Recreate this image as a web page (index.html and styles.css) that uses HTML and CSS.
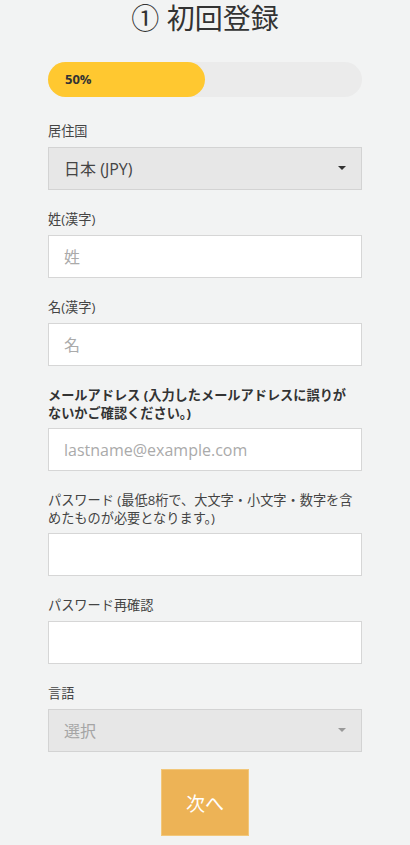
FILE: index.html
```html
<html>
    <head>
        <meta charset="utf-8">
        <link rel="stylesheet" href="styles.css">
    </head>
    <body>
        <div class="page">
            <h1 class="title">① 初回登録</h1>

            <div class="progress">
                <div class="progress-fill" style="width: 50%">50%</div>
            </div>

            <form id="signupForm">
                <div class="field">
                    <label for="country">居住国</label>
                    <div class="select-wrap">
                        <select id="country" name="country">
                            <option>日本 (JPY)</option>
                        </select>
                        <span class="caret"></span>
                    </div>
                </div>

                <div class="field">
                    <label for="lastname">姓(漢字)</label>
                    <input type="text" id="lastname" name="lastname" placeholder="姓" />
                </div>

                <div class="field">
                    <label for="firstname">名(漢字)</label>
                    <input type="text" id="firstname" name="firstname" placeholder="名" />
                </div>

                <div class="field">
                    <label for="email" class="bold multi">メールアドレス (入力したメールアドレスに誤りが<br/>ないかご確認ください。)</label>
                    <input type="text" id="email" name="email" placeholder="lastname@example.com" />
                </div>

                <div class="field">
                    <label for="password" class="multi">パスワード (最低8桁で、大文字・小文字・数字を含<br/>めたものが必要となります。)</label>
                    <input type="password" id="password" name="password" />
                </div>

                <div class="field">
                    <label for="password2">パスワード再確認</label>
                    <input type="password" id="password2" name="password2" />
                </div>

                <div class="field last">
                    <label for="language">言語</label>
                    <div class="select-wrap">
                        <select id="language" name="language" class="empty">
                            <option>選択</option>
                        </select>
                        <span class="caret light"></span>
                    </div>
                </div>

                <div class="actions">
                    <button type="submit" id="next">次へ</button>
                </div>
            </form>
        </div>
    </body>
</html>
```

FILE: styles.css
```css
body {
    margin: 0;
    font-family: "Open Sans", "Noto Sans CJK JP", sans-serif;
    background-color: #f2f3f3;
    color: #444;
}
.page {
    padding: 0 48px;
}
.title {
    margin: 0;
    height: 36px;
    line-height: 36px;
    text-align: center;
    font-size: 28px;
    font-weight: normal;
    color: #333;
}
.progress {
    margin-top: 26px;
    height: 35px;
    border-radius: 18px;
    background-color: #ebebeb;
}
.progress-fill {
    height: 35px;
    line-height: 35px;
    border-radius: 18px;
    background-color: #ffc830;
    padding-left: 17px;
    box-sizing: border-box;
    font-size: 13px;
    font-weight: bold;
    color: #333;
}
form {
    margin-top: 25px;
}
.field {
    margin-bottom: 20px;
}
.field.last {
    margin-bottom: 17px;
}
label {
    display: block;
    font-size: 13.2px;
    line-height: 19px;
    margin-bottom: 6px;
    color: #444;
    white-space: nowrap;
}
label.multi {
    line-height: 18px;
}
label.bold {
    font-weight: bold;
    color: #333;
}
input[type="text"],
input[type="password"],
select {
    display: block;
    width: 100%;
    height: 43px;
    box-sizing: border-box;
    margin: 0;
    padding: 0 15px;
    border: 1px solid #d6d6d6;
    border-radius: 0;
    background-color: #fff;
    font-family: "Open Sans", "Noto Sans CJK JP", sans-serif;
    font-size: 16px;
    color: #444;
    outline: none;
}
input::placeholder {
    color: #aaa;
}
.select-wrap {
    position: relative;
}
select {
    -webkit-appearance: none;
    appearance: none;
    background-color: #e7e7e7;
    border-color: #d3d3d3;
}
select.empty {
    color: #a5a5a5;
}
.caret {
    position: absolute;
    right: 16px;
    top: 19px;
    width: 0;
    height: 0;
    border-left: 4px solid transparent;
    border-right: 4px solid transparent;
    border-top: 4px solid #333;
}
.caret.light {
    border-top-color: #999;
}
.actions {
    display: flex;
    justify-content: center;
}
#next {
    width: 88px;
    height: 67px;
    background-color: #edb356;
    border: 1px solid #f2c77a;
    color: white;
    font-family: "Open Sans", "Noto Sans CJK JP", sans-serif;
    font-size: 19px;
    cursor: pointer;
}
#next:hover {
    background-color: #e5a53f;
}
```
